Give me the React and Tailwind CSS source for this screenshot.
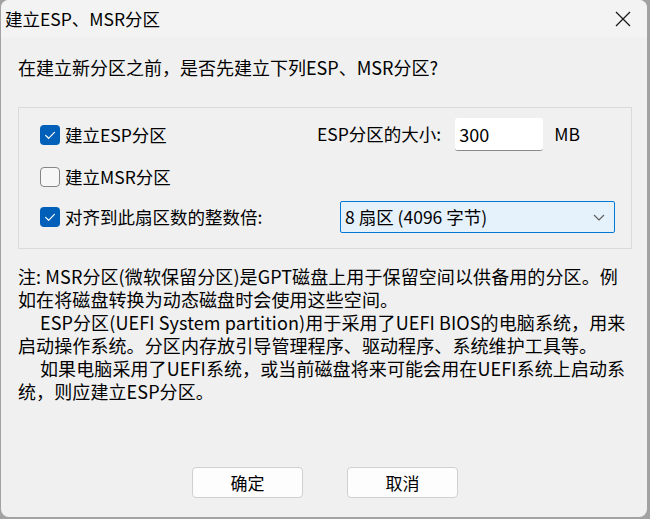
import React from 'react';

const font = { fontFamily: '"Noto Sans CJK SC", "Noto Sans", sans-serif' };

const CheckBox = ({ checked }) => {
  if (checked) {
    return (
      <div className="w-[20px] h-[20px] rounded-[4px] bg-[#005fb8] flex items-center justify-center shrink-0">
        <svg width="20" height="20" viewBox="0 0 20 20" fill="none">
          <path d="M5.6 10.4 L8.6 13.3 L14.4 7.4" stroke="#ffffff" strokeWidth="1.2" strokeLinecap="round" strokeLinejoin="round" />
        </svg>
      </div>
    );
  }
  return <div className="w-[20px] h-[20px] rounded-[4px] border border-[#868686] bg-[#f7f7f7] shrink-0"></div>;
};

const Option = ({ checked, label }) => (
  <div className="flex items-center gap-[5px]">
    <CheckBox checked={checked} />
    <span className="text-[17.5px] leading-[20px] text-black whitespace-nowrap">{label}</span>
  </div>
);

const Btn = ({ children }) => (
  <div className="w-[111px] h-[31px] bg-[#fdfdfd] border border-[#d0d0d0] rounded-[4px] flex items-center justify-center text-[17px] text-black">
    {children}
  </div>
);

const Indent = () => <span className="inline-block w-[22px]"></span>;

export default function App() {
  return (
    <div className="w-[650px] h-[519px] bg-[#a2a2a2] pl-[1px] pr-[3px] pb-[2px]" style={font}>
      <div className="w-[646px] h-[517px] bg-[#f0f0f0] rounded-[8px] overflow-hidden flex flex-col">
        <div className="h-[37px] bg-[#f3f3f3] flex items-center justify-between pl-[4px]">
          <span className="text-[17.5px] leading-none text-black">建立ESP、MSR分区</span>
          <div className="w-[46px] h-full flex items-center justify-center mr-[1px]">
            <svg width="16" height="16" viewBox="0 0 16 16" fill="none">
              <path d="M1 1 L15 15 M15 1 L1 15" stroke="#1a1a1a" strokeWidth="1.3" />
            </svg>
          </div>
        </div>

        <div className="px-[17px] flex flex-col">
          <div className="pt-[18px] text-[18px] leading-[24px] text-black">
            在建立新分区之前，是否先建立下列ESP、MSR分区?
          </div>

          <div className="mt-[28px] w-[614px] h-[142px] border border-[#dadada] pl-[21px] pt-[10px] flex flex-col">
            <div className="h-[33px] flex items-center">
              <div className="w-[277px]">
                <Option checked label="建立ESP分区" />
              </div>
              <span className="text-[17.5px] text-black whitespace-nowrap">ESP分区的大小:</span>
              <div className="ml-auto w-[88px] h-[33px] bg-white rounded-[3px] border-b border-[#8a8a8a] flex items-center pl-[4px] text-[18px] text-black">
                300
              </div>
              <span className="ml-[11px] mr-[51px] text-[17.5px] text-black">MB</span>
            </div>
            <div className="mt-[16px] h-[20px] flex items-center">
              <Option label="建立MSR分区" />
            </div>
            <div className="mt-[14px] h-[32px] flex items-center">
              <div className="w-[300px]">
                <Option checked label="对齐到此扇区数的整数倍:" />
              </div>
              <div className="w-[275px] h-[32px] bg-[#e5f1fb] border border-[#0078d4] rounded-[2px] flex items-center justify-between pl-[4px] pr-[8px]">
                <span className="text-[17.5px] text-black whitespace-nowrap">8 扇区 (4096 字节)</span>
                <svg width="14" height="10" viewBox="0 0 14 10" fill="none">
                  <path d="M2 3 L7 8 L12 3" stroke="#5f5f5f" strokeWidth="1.2" />
                </svg>
              </div>
            </div>
          </div>

          <div className="mt-[16px] text-[18px] leading-[23px] text-black whitespace-nowrap tracking-[0.1px]">
            注: MSR分区(微软保留分区)是GPT磁盘上用于保留空间以供备用的分区。例<br />
            如在将磁盘转换为动态磁盘时会使用这些空间。<br />
            <Indent />ESP分区(UEFI System partition)用于采用了UEFI BIOS的电脑系统，用来<br />
            启动操作系统。分区内存放引导管理程序、驱动程序、系统维护工具等。<br />
            <Indent />如果电脑采用了UEFI系统，或当前磁盘将来可能会用在UEFI系统上启动系<br />
            统，则应建立ESP分区。
          </div>

          <div className="mt-[64px] ml-[174px] flex gap-[44px]">
            <Btn>确定</Btn>
            <Btn>取消</Btn>
          </div>
        </div>
      </div>
    </div>
  );
}
